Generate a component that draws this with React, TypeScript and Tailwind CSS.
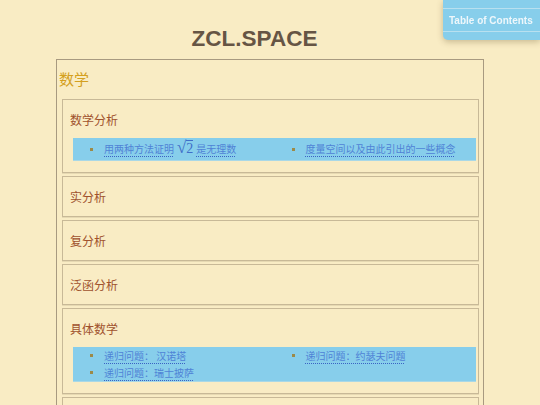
const cjk = '"Noto Sans CJK SC", "Noto Sans", sans-serif';

type Item = { label: React.ReactNode };

const Bullet = () => (
  <span className="absolute left-[17px] top-1/2 -mt-[1.5px] h-[3px] w-[3px] bg-[#9c8a48]" />
);

const Link = ({ children }: { children: React.ReactNode }) => (
  <a
    href="#"
    className="text-[#4f83d6] underline decoration-dotted decoration-[#3a63c4] underline-offset-[3px]"
  >
    {children}
  </a>
);

const Sqrt2 = () => (
  <span className="mx-[3px] inline-flex items-end font-['Liberation_Serif',serif] leading-none text-[#3f6fc8]">
    <span className="text-[17px]">√</span>
    <span className="border-t border-[#3f6fc8] pt-[1px] text-[14px]">2</span>
  </span>
);

const List = ({ items, rowClass }: { items: Item[]; rowClass: string }) => (
  <ul className="ml-[3px] mt-[11px] grid grid-cols-2 bg-[#87ceeb] shadow-[0_1px_0_#a9d8e6]">
    {items.map((it, i) => (
      <li key={i} className={`relative pl-[31px] text-[10px] ${rowClass}`}>
        <Bullet />
        <Link>{it.label}</Link>
      </li>
    ))}
  </ul>
);

const Section = ({ title, items, rowClass = "leading-[17px]" }: { title?: string; items?: Item[]; rowClass?: string }) => (
  <div className="ml-[5px] mr-[4px] min-h-[41px] border border-[#c8b997] pb-[12px] pl-[7px] pr-[2px] pt-[12px] shadow-[0_1px_0_#e6d9b2]">
    {title && <h3 className="text-[12px] leading-[15px] text-[#a0522d]">{title}</h3>}
    {items && <List items={items} rowClass={rowClass} />}
  </div>
);

export default function App() {
  return (
    <div className="min-h-screen bg-[#f9ecc4] pb-10" style={{ fontFamily: cjk }}>
      <div className="fixed right-0 top-0 z-10 h-[40px] w-[97px] rounded-bl-[5px] bg-[#87ceeb] shadow-[0_2px_6px_rgba(90,70,30,0.3)]">
        <div className="mt-[8px] flex h-[24px] items-center border-y border-[#b8e0ef] pl-[6px] font-['Liberation_Sans',Arial,sans-serif] text-[10px] font-bold text-[#eef7fb]">
          Table of Contents
        </div>
      </div>

      <h1 className="pr-[31px] pt-[26px] text-center font-['Liberation_Sans',Arial,sans-serif] text-[22.5px] font-bold leading-[26px] text-[#665544]">
        ZCL.SPACE
      </h1>

      <div className="mx-auto mt-[7px] w-[428px] border border-[#a89a80] pb-[6px]">
        <h2 className="pb-[10px] pl-[2px] pt-[9px] text-[15px] leading-[20px] text-[#d4a020]">数学</h2>
        <div className="flex flex-col gap-[3px]">
          <Section
            title="数学分析"
            rowClass="leading-[22px]"
            items={[
              {
                label: (
                  <>
                    用两种方法证明
                    <Sqrt2 />
                    是无理数
                  </>
                ),
              },
              { label: "度量空间以及由此引出的一些概念" },
            ]}
          />
          <Section title="实分析" />
          <Section title="复分析" />
          <Section title="泛函分析" />
          <Section
            title="具体数学"
            items={[
              { label: "递归问题： 汉诺塔" },
              { label: "递归问题：约瑟夫问题" },
              { label: "递归问题：瑞士披萨" },
            ]}
          />
          <Section />
        </div>
      </div>
    </div>
  );
}
